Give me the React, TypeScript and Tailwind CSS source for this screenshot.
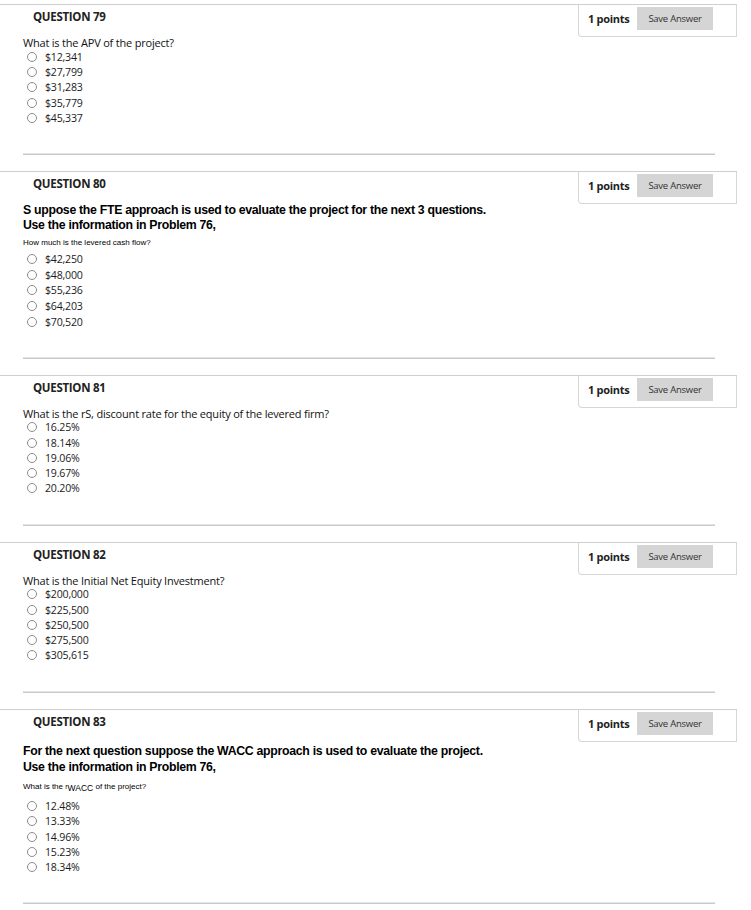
import React from "react";

type Question = {
  number: number;
  text?: string;
  options: string[];
  variant?: "plain" | "fte" | "wacc";
};

const questions: Question[] = [
  {
    number: 79,
    text: "What is the APV of the project?",
    options: ["$12,341", "$27,799", "$31,283", "$35,779", "$45,337"],
  },
  {
    number: 80,
    variant: "fte",
    options: ["$42,250", "$48,000", "$55,236", "$64,203", "$70,520"],
  },
  {
    number: 81,
    text: "What is the rS, discount rate for the equity of the levered firm?",
    options: ["16.25%", "18.14%", "19.06%", "19.67%", "20.20%"],
  },
  {
    number: 82,
    text: "What is the Initial Net Equity Investment?",
    options: ["$200,000", "$225,500", "$250,500", "$275,500", "$305,615"],
  },
  {
    number: 83,
    variant: "wacc",
    options: ["12.48%", "13.33%", "14.96%", "15.23%", "18.34%"],
  },
];

const openSans = "font-['Open_Sans',_'Liberation_Sans',_sans-serif]";
const arial = "font-['Liberation_Sans',_Arial,_sans-serif]";

function OptionList({ options, row }: { options: string[]; row: string }) {
  return (
    <div className="flex flex-col">
      {options.map((opt) => (
        <div key={opt} className={`flex items-center ${row}`}>
          <span className="ml-[4px] h-[10px] w-[10px] shrink-0 rounded-full border border-[#8c8c8c] bg-white" />
          <span
            className={`ml-[8px] text-[10.6px] leading-[14px] tracking-[-0.2px] text-[#1a1a1a] ${openSans}`}
          >
            {opt}
          </span>
        </div>
      ))}
    </div>
  );
}

function QuestionBlock({ q }: { q: Question }) {
  return (
    <div className="flex flex-col">
      <div className="flex h-[32px] w-[737px] border-t border-[#cfcfcf]">
        <div
          className={`flex-1 pl-[33px] pt-[4px] text-[11.5px] font-bold leading-[16px] tracking-[-0.3px] text-[#222] ${openSans}`}
        >
          QUESTION {q.number}
        </div>
        <div className="flex h-[32px] w-[159px] items-start rounded-bl-[4px] border-b border-l border-r border-[#d6d6d6] pl-[9px] pt-[2px]">
          <span
            className={`mt-[4px] text-[11px] font-bold leading-[16px] tracking-[-0.3px] text-[#222] ${openSans}`}
          >
            1 points
          </span>
          <button
            className={`ml-auto mr-[23px] h-[23px] w-[76px] bg-[#d5d5d5] text-[9.5px] leading-[23px] tracking-[-0.25px] text-[#333] ${openSans}`}
          >
            Save Answer
          </button>
        </div>
      </div>

      <div className="pl-[23px]">
        {q.variant === "fte" && (
          <>
            <p
              className={`mt-[0.5px] text-[12.3px] font-bold leading-[15px] tracking-[-0.3px] text-black ${arial}`}
            >
              S uppose the FTE approach is used to evaluate the project for the next 3 questions.
              <br />
              Use the information in Problem 76,
            </p>
            <p className={`mt-[5px] text-[8px] leading-[10px] text-black ${arial}`}>
              How much is the levered cash flow?
            </p>
            <div className="mt-[2.4px]">
              <OptionList options={q.options} row="h-[15.75px]" />
            </div>
            <div className="mt-[27px]" />
          </>
        )}

        {q.variant === "wacc" && (
          <>
            <p
              className={`mt-[3.75px] text-[12.3px] font-bold leading-[15.5px] tracking-[-0.3px] text-black ${arial}`}
            >
              For the next question suppose the WACC approach is used to evaluate the project.
              <br />
              Use the information in Problem 76,
            </p>
            <p className={`mt-[5.25px] text-[8px] leading-[10px] text-black ${arial}`}>
              What is the <span className="text-[7px]">r</span>
              <span className="relative top-[2px] text-[8.5px]">WACC</span> of the project?
            </p>
            <div className="mt-[6.6px]">
              <OptionList options={q.options} row="h-[15.35px]" />
            </div>
            <div className="mt-[27.3px]" />
          </>
        )}

        {!q.variant && (
          <>
            <p
              className={`text-[11px] leading-[13px] tracking-[-0.2px] text-[#111] ${openSans}`}
            >
              {q.text}
            </p>
            <OptionList options={q.options} row="h-[15.3px]" />
            <div className="mt-[27.5px]" />
          </>
        )}
      </div>

      <div className="mb-[16px] ml-[23px] w-[692px] border-b border-t border-b-[#c9c9c9] border-t-[#e4e4e4]" />
    </div>
  );
}

export default function App() {
  return (
    <div className="min-h-[910px] w-[751px] bg-white pt-[4px]">
      {questions.map((q) => (
        <QuestionBlock key={q.number} q={q} />
      ))}
    </div>
  );
}
